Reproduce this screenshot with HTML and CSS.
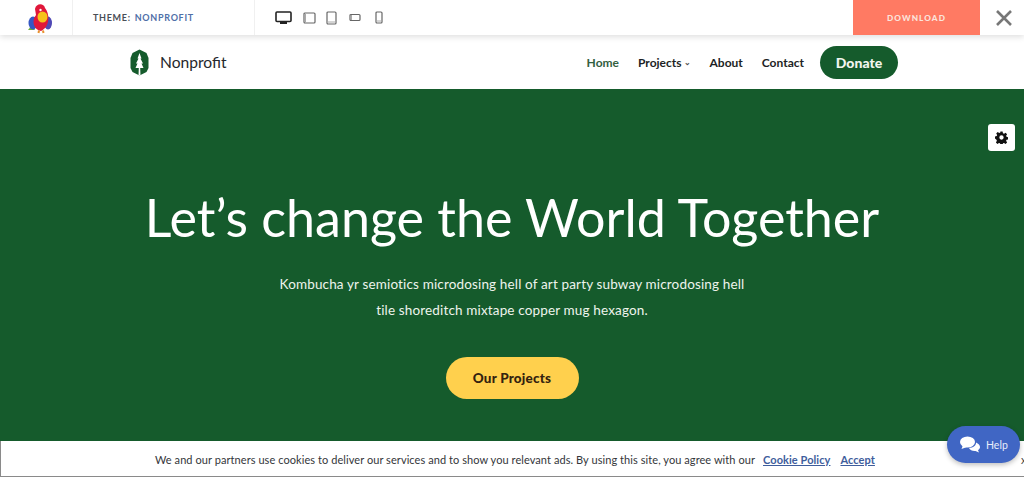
FILE: index.html
```html
<!DOCTYPE html>
<html lang="en">
<head>
<meta charset="utf-8">
<title>Nonprofit</title>
<link rel="stylesheet" href="styles.css">
</head>
<body>
<div class="page">
  <header class="topbar">
    <div class="brand-cell">
      <svg width="26" height="32" viewBox="0 0 26 32">
        <path d="M5 23 L1 28 L8 28Z" fill="#6cab3c"/>
        <ellipse cx="6" cy="21" rx="4.500" ry="6.500" fill="#3557c4"/>
        <ellipse cx="21" cy="21" rx="4" ry="6.500" fill="#4f49b5"/>
        <path d="M8 7 C9 1 17 1 18 6 C23 12 23 25 14 29 C7 28 4 19 9 13 Z" fill="#e0173a"/>
        <ellipse cx="15.500" cy="15" rx="5" ry="5.500" fill="#f6c21c"/>
        <circle cx="13.500" cy="8" r="1.200" fill="#fff"/>
        <path d="M12 28.500 L11.500 31 M16 28.500 L16.500 31" stroke="#e8912c" stroke-width="2"/>
      </svg>
    </div>
    <div class="theme-cell">THEME: <span class="theme-name">NONPROFIT</span></div>
    <div class="devices">
      <svg class="dev" width="17" height="14" viewBox="0 0 17 14"><rect x="1" y="1" width="15" height="9.500" rx="1" fill="#fff" stroke="#222" stroke-width="1.600"/><path d="M5 11h7v2H5z" fill="#222"/></svg>
      <svg class="dev" width="13" height="12" viewBox="0 0 13 12"><rect x="1" y="1" width="11" height="10" rx="1" fill="none" stroke="#666" stroke-width="1.200"/><path d="M2.500 1.500v9" stroke="#aaa"/></svg>
      <svg class="dev" width="11" height="14" viewBox="0 0 11 14"><rect x="1" y="1" width="9" height="12" rx="1" fill="none" stroke="#666" stroke-width="1.200"/><path d="M1.500 11h8" stroke="#aaa"/></svg>
      <svg class="dev" width="12" height="9" viewBox="0 0 12 9"><rect x="1" y="1.500" width="10" height="6" rx="1" fill="none" stroke="#666" stroke-width="1.200"/><path d="M2.500 2v5" stroke="#aaa"/></svg>
      <svg class="dev" width="8" height="13" viewBox="0 0 8 13"><rect x="1" y="1" width="6" height="11" rx="1" fill="none" stroke="#666" stroke-width="1.200"/><path d="M1.500 10h5" stroke="#aaa"/></svg>
    </div>
    <a class="download">DOWNLOAD</a>
    <div class="close-cell">
      <svg width="18" height="18" viewBox="0 0 18 18"><path d="M2 2L16 16M16 2L2 16" stroke="#777" stroke-width="2.600"/></svg>
    </div>
  </header>

  <nav class="nav">
    <div class="logo">
      <svg width="19" height="27" viewBox="0 0 19 27">
        <path d="M9.500 0.500L16.500 4 18.500 9v10l-2 4-7 3.500-7-3.500-2-4V9l2-5z" fill="#155b2c"/>
        <path d="M9.500 4l2 5.500-1 0 2.500 5-1.500 0 2 4.500-3.300 0 .3 7.500h-2l.3-7.500-3.300 0 2-4.500-1.500 0 2.500-5-1 0z" fill="#fff"/>
      </svg>
      <span class="logo-text">Nonprofit</span>
    </div>
    <div class="links">
      <a class="link active">Home</a>
      <a class="link">Projects<span class="caret">⌄</span></a>
      <a class="link">About</a>
      <a class="link">Contact</a>
      <a class="donate">Donate</a>
    </div>
  </nav>

  <main class="hero">
    <h1 class="title">Let’s change the World Together</h1>
    <p class="lead">Kombucha yr semiotics microdosing hell of art party subway microdosing hell<br>tile shoreditch mixtape copper mug hexagon.</p>
    <a class="cta">Our Projects</a>
  </main>

  <div class="cookie">
    <span>We and our partners use cookies to deliver our services and to show you relevant ads. By using this site, you agree with our</span>
    <a class="cookie-link">Cookie Policy</a>
    <a class="cookie-link">Accept</a>
    <span class="cookie-x">x</span>
  </div>

  <button class="gear" aria-label="Settings">
    <svg width="13" height="13" viewBox="0 0 24 24"><path fill-rule="evenodd" d="M10 1h4l.7 3.200 2 .8 2.800-1.800 2.800 2.800-1.800 2.800.8 2 3.200.7v4l-3.200.7-.8 2 1.800 2.800-2.800 2.800-2.800-1.800-2 .8-.7 3.200h-4l-.7-3.200-2-.8-2.800 1.800-2.800-2.800 1.800-2.800-.8-2L0 14v-4l3.200-.7.8-2-1.800-2.800 2.800-2.800 2.800 1.800 2-.8zM12 8a4 4 0 1 0 0 8 4 4 0 0 0 0-8z" fill="#111"/></svg>
  </button>

  <a class="help">
    <svg width="20" height="17" viewBox="0 0 20 17"><ellipse cx="7.500" cy="6" rx="7.500" ry="5.500" fill="#fff"/><path d="M3 9L1.500 13 7 11z" fill="#fff"/><path d="M16 6.500c2.500 1 4 2.800 4 4.500 0 1.300-.8 2.400-2 3.200l1 2.300-3.500-1.500c-2.800.3-5.500-.7-6.500-3 4.200-.2 7.300-2.500 7-5.500z" fill="#fff"/></svg>
    <span>Help</span>
  </a>
</div>
</body>
</html>
```

FILE: styles.css
```css
* { box-sizing: border-box; }
html, body { margin: 0; height: 100%; }
body { font-family: "Lato", "Liberation Sans", sans-serif; background: #fff; overflow: hidden; }
a { text-decoration: none; color: inherit; }

.page { position: relative; height: 477px; width: 1024px; overflow: hidden; display: flex; flex-direction: column; }

.topbar { height: 35px; flex: none; display: flex; align-items: stretch; background: #fff; position: relative; z-index: 2; box-shadow: 0 2px 6px rgba(0,0,0,.13); }
.brand-cell { width: 73px; padding: 1px 0 0 27px; border-right: 1px solid #f0f0f0; display: flex; align-items: center; }
.theme-cell { width: 182px; padding-left: 20px; border-right: 1px solid #f0f0f0; display: flex; align-items: center; gap: 4px; font-size: 9px; font-weight: 700; letter-spacing: .7px; color: #4a4f57; white-space: nowrap; }
.theme-name { color: #4f6fa8; }
.devices { width: 598px; padding-left: 20px; display: flex; align-items: center; gap: 10px; }
.dev:nth-child(2) { margin-left: 1px; }
.dev:nth-child(4) { margin-left: 2px; }
.dev:nth-child(5) { margin-left: 4px; }
.download { width: 127px; background: #ff7a63; color: #fbe4dc; font-size: 8.200px; font-weight: 900; letter-spacing: 1.100px; display: flex; align-items: center; justify-content: center; }
.close-cell { flex: 1; display: flex; align-items: center; justify-content: center; padding-left: 4px; }

.nav { height: 54px; flex: none; display: flex; align-items: center; padding: 0 126px 0 130px; background: #fff; justify-content: space-between; }
.logo { display: flex; align-items: center; gap: 11px; }
.logo-text { font-size: 15.600px; color: #26282c; }
.links { display: flex; align-items: center; gap: 19px; font-size: 12px; font-weight: 700; color: #1d1f24; }
.link { white-space: nowrap; }
.active { color: #33603f; }
.caret { font-size: 8px; margin-left: 2px; color: #555; position: relative; top: -2px; }
.donate { background: #155b2c; color: #f2f5ee; font-size: 14px; font-weight: 900; width: 78px; height: 33px; border-radius: 17px; display: flex; align-items: center; justify-content: center; margin-left: -3px; }

.hero { flex: 1; min-height: 0; background: #155b2c; display: flex; flex-direction: column; align-items: center; color: #fff; padding-top: 90px; }
.title { margin: 0; font-size: 52px; line-height: 76px; font-weight: 400; white-space: nowrap; }
.lead { margin: 16px 0 0; font-size: 13.500px; line-height: 26px; text-align: center; letter-spacing: .15px; color: #eef4ec; }
.cta { margin-top: 34px; width: 133px; height: 42px; border-radius: 21px; background: #ffd04d; color: #33220f; font-size: 13.500px; font-weight: 900; letter-spacing: .2px; display: flex; align-items: center; justify-content: center; }

.cookie { height: 36px; flex: none; background: #fff; border: 1px solid #8a8a8a; border-top: 0; border-right: 0; display: flex; align-items: center; padding: 1px 0 0 154px; font-size: 11px; letter-spacing: .07px; color: #34363a; white-space: nowrap; position: relative; }
.cookie-link { color: #3e5d9c; font-weight: 700; text-decoration: underline; margin-left: 10px; }
.cookie-link:nth-child(2) { margin-left: 8px; }
.cookie-x { position: absolute; left: 1020px; top: 12px; color: #444; }

.gear { position: absolute; top: 124px; left: 988px; width: 27px; height: 27px; padding: 0; border: 0; background: #fff; border-radius: 3px; display: flex; align-items: center; justify-content: center; }

.help { position: absolute; left: 947px; top: 426px; width: 73px; height: 37px; border-radius: 19px; background: #4066c4; color: #e8edfa; font-size: 10.500px; display: flex; align-items: center; gap: 6px; padding-left: 13px; z-index: 3; box-shadow: 0 2px 5px rgba(0,0,0,.25); }
```
